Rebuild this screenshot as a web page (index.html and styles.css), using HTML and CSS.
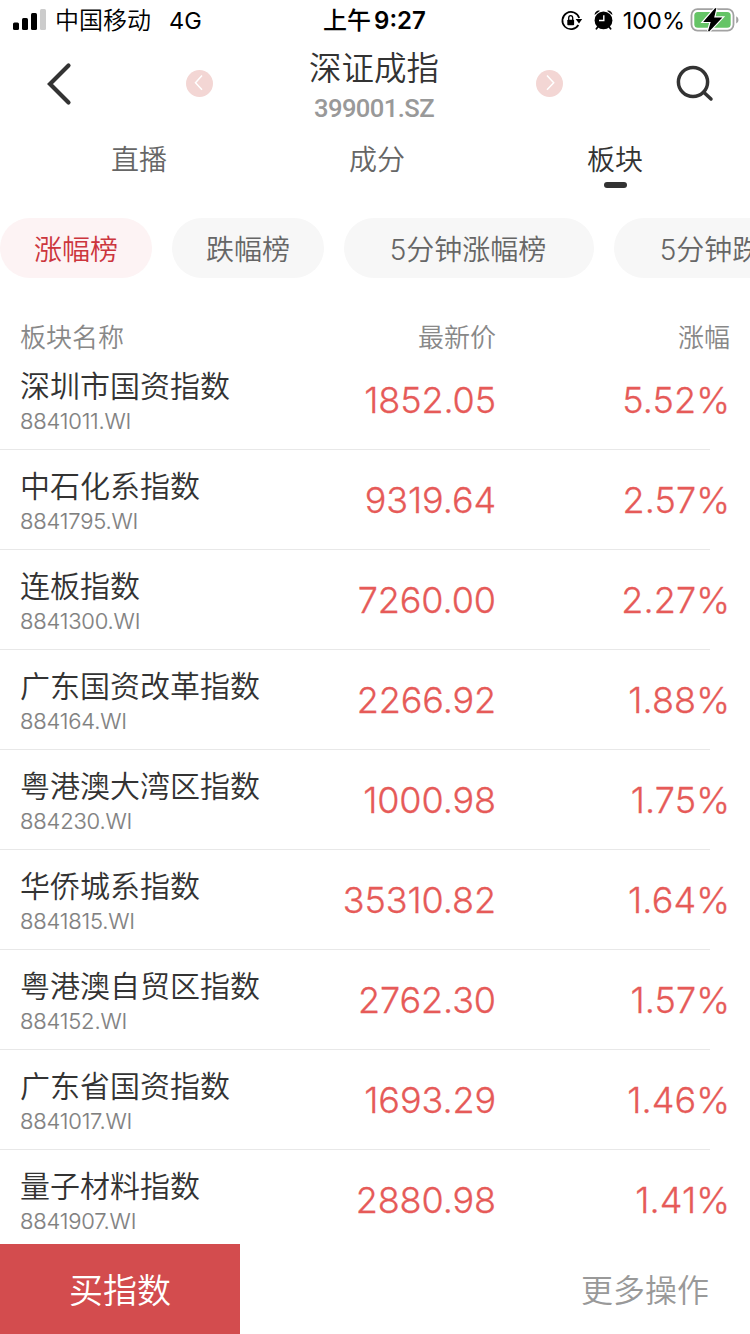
FILE: index.html
```html
<!DOCTYPE html>
<html lang="zh-CN">
<head>
<meta charset="utf-8">
<title>深证成指</title>
<link rel="stylesheet" href="styles.css">
</head>
<body>
<div class="app">
  <div class="status">
    <div class="status-side">
      <svg class="signal" width="34" height="22" viewBox="0 0 34 22"><rect x="0" y="13.500" width="6" height="7.500" rx="1.5"/><rect x="9" y="9" width="6" height="12" rx="1.5"/><rect x="18" y="4" width="6" height="17" rx="1.5"/><rect x="27" y="0" width="6" height="21" rx="1.5" fill="#ccc"/></svg>
      <span class="carrier">中国移动</span><span class="network">4G</span>
    </div>
    <div class="clock"><span>上午</span><span class="time">9:27</span></div>
    <div class="status-side right">
      <svg class="lock" width="22" height="22" viewBox="0 0 22 22"><path d="M17.400 15A8.600 8.600 0 1 1 18.200 8" fill="none" stroke="#000" stroke-width="1.7"/><path d="M14.600 9h6.600l-3.200 4.400z"/><rect x="6.300" y="9.800" width="6.800" height="5.500" rx=".8"/><path d="M7.700 10V8a2 2.400 0 0 1 4 0v2" fill="none" stroke="#000" stroke-width="1.300"/></svg>
      <svg class="alarm" width="20" height="20" viewBox="0 0 20 20"><circle cx="9.500" cy="10.400" r="8.900"/><path d="M.6 5A4.200 4.200 0 0 1 6 .8zM13 .8A4.200 4.200 0 0 1 18.400 5z"/><path d="M4 16.800l-1.600 2M15 16.800l1.600 2" stroke="#000" stroke-width="1.800" stroke-linecap="round"/><path d="M9.800 5.200v5.300H5" fill="none" stroke="#fff" stroke-width="1.400"/></svg>
      <span class="percent">100%</span>
      <svg class="battery" width="49" height="24" viewBox="0 0 49 24"><rect x="1.500" y="1.200" width="42" height="21.400" rx="6" fill="none" stroke="#a2a2a2" stroke-width="1.800"/><rect x="4.300" y="4" width="36.400" height="15.800" rx="3.600" fill="#65c466"/><path d="M46.200 8.200q2.300 1.200 2.300 3.700t-2.300 3.700z" fill="#a2a2a2"/><path d="M25.700 .5L14.500 13.300h7L18.700 23 31 10h-7.600z" fill="#000" stroke="#fff" stroke-width="3.600" paint-order="stroke"/><path d="M25.700 .5L14.500 13.300h7L18.700 23 31 10h-7.600z" fill="#000" stroke="#000" stroke-width="1.200"/></svg>
    </div>
  </div>
  <header class="nav">
    <svg class="back" width="28" height="44" viewBox="0 0 28 44"><path d="M22.500 3.500L4 22l18.500 18.500" fill="none" stroke="#333" stroke-width="4.200" stroke-linecap="round"/></svg>
    <svg class="step prev" width="27" height="27" viewBox="0 0 27 27"><circle cx="13.500" cy="13.500" r="13.500" fill="#f3d6d4"/><path d="M16 5.500L9.500 12.700l6.500 7" fill="none" stroke="#fff" stroke-width="1.500"/></svg>
    <div class="heading"><h1 class="title">深证成指</h1><div class="ticker">399001.SZ</div></div>
    <svg class="step next" width="27" height="27" viewBox="0 0 27 27"><circle cx="13.500" cy="13.500" r="13.500" fill="#f3d6d4"/><path d="M11 5.500l6.700 7.200-6.700 7" fill="none" stroke="#fff" stroke-width="1.500"/></svg>
    <svg class="search" width="38" height="38" viewBox="0 0 38 38"><circle cx="17" cy="17" r="14.600" fill="none" stroke="#333" stroke-width="3.500"/><path d="M28 27.500l7 6.500" stroke="#333" stroke-width="3.500" stroke-linecap="round"/></svg>
  </header>
  <nav class="tabs"><span class="tab">直播</span><span class="tab">成分</span><span class="tab active">板块</span></nav>
  <div class="chips"><span class="chip selected">涨幅榜</span><span class="chip">跌幅榜</span><span class="chip wide">5分钟涨幅榜</span><span class="chip wide">5分钟跌幅榜</span></div>
  <div class="columns"><span>板块名称</span><span class="num">最新价</span><span class="num">涨幅</span></div>
  <main class="list">
    <div class="row"><div><div class="name">深圳市国资指数</div><div class="code">8841011.WI</div></div><div class="value">1852.05</div><div class="value change">5.52%</div></div>
    <div class="row"><div><div class="name">中石化系指数</div><div class="code">8841795.WI</div></div><div class="value">9319.64</div><div class="value change">2.57%</div></div>
    <div class="row"><div><div class="name">连板指数</div><div class="code">8841300.WI</div></div><div class="value">7260.00</div><div class="value change">2.27%</div></div>
    <div class="row"><div><div class="name">广东国资改革指数</div><div class="code">884164.WI</div></div><div class="value">2266.92</div><div class="value change">1.88%</div></div>
    <div class="row"><div><div class="name">粤港澳大湾区指数</div><div class="code">884230.WI</div></div><div class="value">1000.98</div><div class="value change">1.75%</div></div>
    <div class="row"><div><div class="name">华侨城系指数</div><div class="code">8841815.WI</div></div><div class="value">35310.82</div><div class="value change">1.64%</div></div>
    <div class="row"><div><div class="name">粤港澳自贸区指数</div><div class="code">884152.WI</div></div><div class="value">2762.30</div><div class="value change">1.57%</div></div>
    <div class="row"><div><div class="name">广东省国资指数</div><div class="code">8841017.WI</div></div><div class="value">1693.29</div><div class="value change">1.46%</div></div>
    <div class="row"><div><div class="name">量子材料指数</div><div class="code">8841907.WI</div></div><div class="value">2880.98</div><div class="value change">1.41%</div></div>
  </main>
  <footer class="actions"><button class="buy">买指数</button><span class="more">更多操作</span></footer>
</div>
</body>
</html>
```
FILE: styles.css
```css
* { box-sizing: border-box; }
body { margin: 0; background: #fff; color: #333; font-family: Inter, "Noto Sans CJK SC", sans-serif; font-weight: 350; }
svg { display: block; flex: none; }
.app { width: 750px; height: 1334px; display: flex; flex-direction: column; overflow: hidden; }
.status { height: 42px; display: grid; grid-template-columns: 1fr auto 1fr; align-items: center; padding: 0 11px 0 13px; color: #000; font-size: 24px; line-height: 42px; }
.status-side { display: flex; align-items: center; }
.right { justify-content: flex-end; }
.signal { margin-right: 8px; margin-top: -2px; }
.network { margin-left: 18px; font-size: 23.5px; font-weight: 400; }
.clock { display: flex; gap: 3px; margin-right: 3px; font-weight: 500; }
.time { font-weight: 600; }
.lock { margin-top: -1px; }
.alarm { margin: -2px 0 0 11px; }
.percent { margin: 0 5px 0 9px; font-size: 23.5px; font-weight: 400; }
.battery { margin-top: -2px; }
.nav { height: 86px; display: flex; align-items: flex-start; padding: 0 36px 0 46px; }
.back { margin-top: 20px; }
.step { margin-top: 28px; }
.prev { margin-left: 112px; }
.heading { width: 322px; text-align: center; }
.title { margin: 7px 0 0; font-size: 32.5px; line-height: 40px; font-weight: 350; }
.ticker { font-family: Roboto, sans-serif; font-size: 26.5px; line-height: 38px; font-weight: 500; letter-spacing: -.6px; color: #999; transform: scaleX(.965); }
.next { margin-left: 1px; }
.search { margin: 23px 0 0 auto; }
.tabs { height: 62px; display: grid; grid-template-columns: repeat(3, 238px); padding-left: 20px; font-size: 28px; line-height: 64px; color: #666; }
.tab { display: flex; flex-direction: column; align-items: center; }
.active { color: #333; }
.active::after { content: ""; width: 23px; height: 6px; margin-top: -10px; border-radius: 3px; background: #333; }
.chips { margin-top: 28px; display: flex; gap: 20px; white-space: nowrap; }
.chip { flex: none; width: 152px; height: 60px; border-radius: 30px; background: #f7f7f7; color: #666; font-size: 28px; line-height: 64px; text-align: center; }
.selected { background: #fdf3f4; color: #cc353d; }
.wide { width: 250px; padding-right: 2px; }
.columns { height: 72px; padding: 39px 20px 0; display: grid; grid-template-columns: 200px 276px 1fr; font-size: 26px; line-height: 42px; color: #888; }
.num { text-align: right; }
.list { flex: 1; min-height: 0; overflow: hidden; }
.row { height: 100px; padding: 0 0 0 20px; margin-right: 40px; display: grid; grid-template-columns: 260px 216px 232px; background: linear-gradient(#e8e8e8, #e8e8e8) left bottom / 100% 1px no-repeat; }
.name { margin-top: 16px; font-size: 30px; line-height: 40px; white-space: nowrap; }
.code { font-size: 22px; line-height: 31px; letter-spacing: -.2px; color: #808080; -webkit-text-stroke: .15px #808080; }
.value { font-size: 36px; line-height: 101px; letter-spacing: -.1px; color: #e65a58; text-align: right; -webkit-text-stroke: .3px #e65a58; }
.change { margin-right: -2px; letter-spacing: .1px; }
.actions { height: 90px; flex: none; display: flex; justify-content: space-between; background: #fff; }
.buy { width: 240px; border: 0; padding: 3px 0 0; background: #d34c4e; color: #fff; font: inherit; font-size: 34px; line-height: 87px; }
.more { padding-right: 41px; font-size: 32px; line-height: 93px; color: #999; }
```
